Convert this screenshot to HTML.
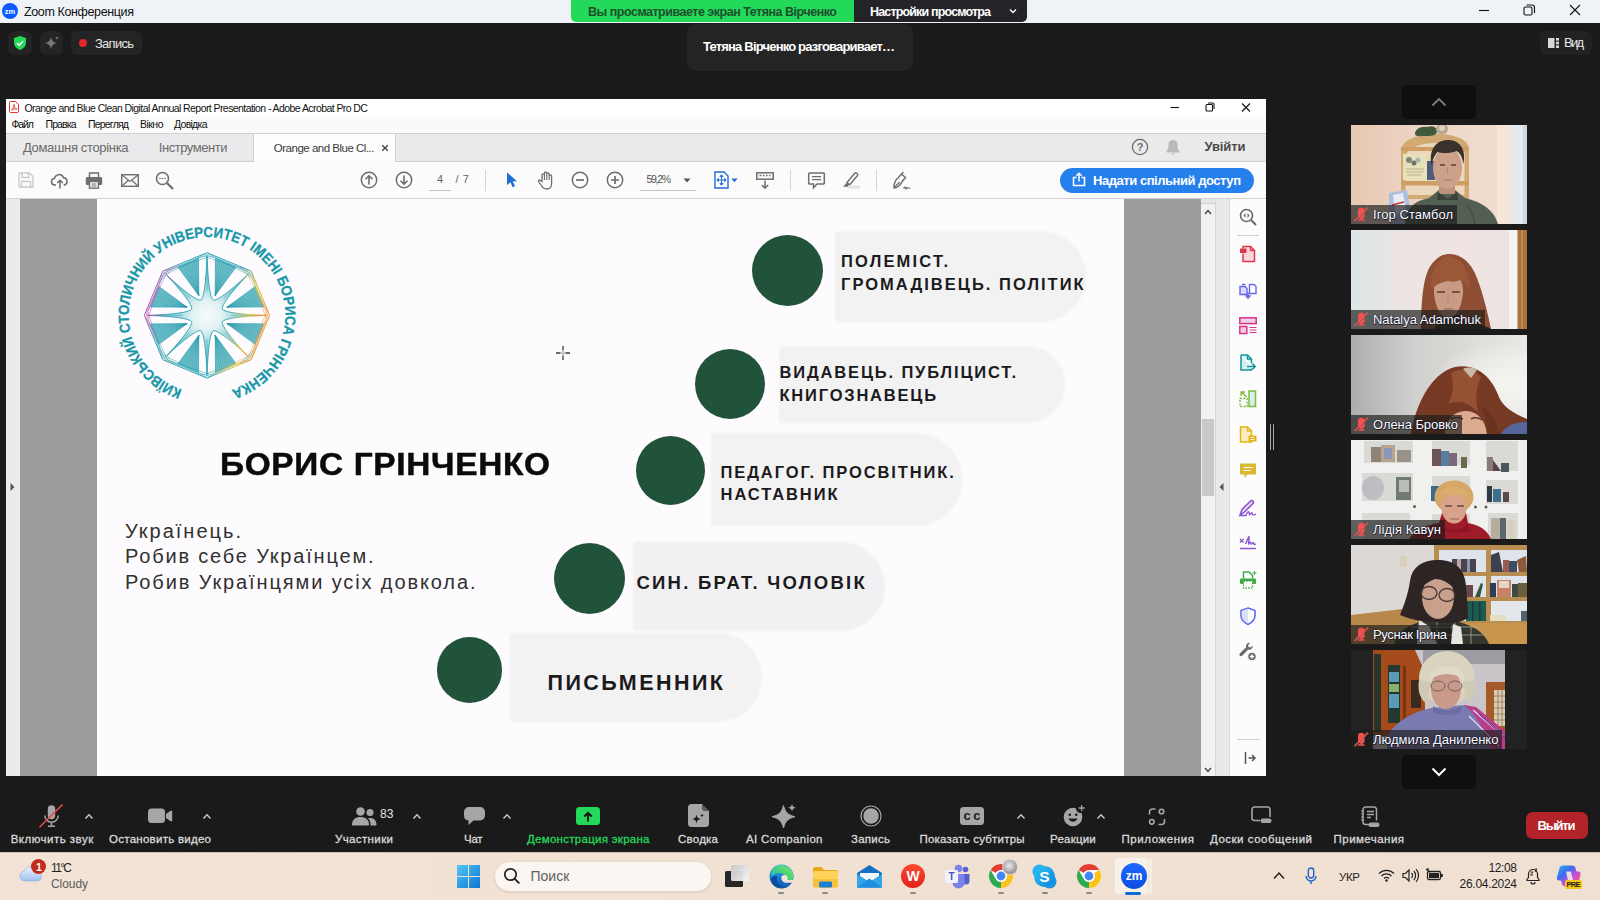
<!DOCTYPE html>
<html lang="uk"><head><meta charset="utf-8"><title>Zoom Конференция</title>
<style>
html,body{margin:0;padding:0;width:1600px;height:900px;overflow:hidden;background:#1a1a1a;font-family:"Liberation Sans",sans-serif}
.b{position:absolute;box-sizing:border-box}
.t{position:absolute;white-space:pre;line-height:1}
svg{position:absolute;overflow:visible}
#root{position:relative;width:1600px;height:900px;overflow:hidden}
</style></head><body><div id="root">
<div class="b" style="left:0px;top:0px;width:1600px;height:23px;background:#eff3f8;"></div>
<svg style="left:2px;top:3px" width="16" height="16" viewBox="0 0 16 16"><circle cx="8" cy="8" r="8" fill="#0b5cff"/><text x="8" y="10.6" font-family="Liberation Sans, sans-serif" font-size="7.5" font-weight="bold" fill="#fff" text-anchor="middle">zm</text></svg>
<span class="t" style="left:24.00px;top:6px;font:normal 12.5px 'Liberation Sans', sans-serif;line-height:1;color:#111;letter-spacing:-0.368px;">Zoom Конференция</span>
<svg style="left:1470px;top:0" width="130" height="23" viewBox="0 0 130 23" fill="none" stroke="#111" stroke-width="1.1"><path d="M9 10.5h10"/><rect x="54" y="7" width="8" height="8" rx="1.5"/><path d="M56.5 5h5.5a2.5 2.5 0 0 1 2.500 2.500v5.500"/><path d="M100 5l10 10M110 5l-10 10"/></svg>
<div class="b" style="left:571px;top:0px;width:283px;height:22px;background:#23d959;border-radius:0 0 0 5px"></div>
<div class="b" style="left:854px;top:0px;width:173px;height:22px;background:#232328;border-radius:0 0 5px 0"></div>
<span class="t" style="left:588.00px;top:6px;font:bold 12.5px 'Liberation Sans', sans-serif;line-height:1;color:#1d4f2c;letter-spacing:-0.483px;">Вы просматриваете экран Тетяна Вірченко</span>
<span class="t" style="left:870.00px;top:6px;font:bold 12.5px 'Liberation Sans', sans-serif;line-height:1;color:#fff;letter-spacing:-0.842px;">Настройки просмотра</span>
<svg style="left:1008px;top:7px" width="10" height="8" viewBox="0 0 10 8" fill="none" stroke="#fff" stroke-width="1.4"><path d="M2 2.500l3 3 3-3"/></svg>
<div class="b" style="left:0px;top:23px;width:1600px;height:829px;background:#1a1a1a;"></div>
<div class="b" style="left:8px;top:31px;width:24px;height:24px;background:#242424;border-radius:6px"></div>
<svg style="left:12px;top:35px" width="16" height="16" viewBox="0 0 16 16"><path d="M8 1l6 2v4.500c0 3.600-2.500 6.300-6 7.500-3.500-1.200-6-3.900-6-7.500V3z" fill="#23d959"/><path d="M5 8l2.200 2.200L11 6.300" fill="none" stroke="#fff" stroke-width="1.600"/></svg>
<div class="b" style="left:40px;top:31px;width:23px;height:24px;background:#242424;border-radius:6px"></div>
<svg style="left:43.500px;top:35px" width="16" height="16" viewBox="0 0 16 16" fill="#77777b"><path d="M7 1.500c.7 4.300 2.200 5.800 6.500 6.500-4.300.7-5.800 2.200-6.500 6.500-.7-4.300-2.200-5.800-6.500-6.500 4.300-.7 5.800-2.200 6.500-6.500z"/><path d="M13 .8c.2 1.400.7 1.900 2.100 2.100-1.400.2-1.900.7-2.100 2.100-.2-1.400-.7-1.900-2.100-2.100 1.400-.2 1.900-.7 2.100-2.100z"/></svg>
<div class="b" style="left:71px;top:31px;width:71px;height:24px;background:#242424;border-radius:6px"></div>
<div class="b" style="left:79px;top:39px;width:8px;height:8px;background:#e02828;border-radius:50%"></div>
<span class="t" style="left:95.00px;top:37px;font:normal 13px 'Liberation Sans', sans-serif;line-height:1;color:#e6e6e6;letter-spacing:-0.731px;">Запись</span>
<div class="b" style="left:687px;top:23.5px;width:226px;height:47.5px;background:#242424;border-radius:9px"></div>
<span class="t" style="left:703.00px;top:40px;font:bold 13px 'Liberation Sans', sans-serif;line-height:1;color:#fff;letter-spacing:-0.813px;">Тетяна Вірченко разговаривает…</span>
<div class="b" style="left:1540px;top:31px;width:52px;height:24px;background:#222;border-radius:6px"></div>
<svg style="left:1548px;top:38px" width="12" height="10" viewBox="0 0 12 10" fill="#d8d8d8"><rect x="0" y="0" width="6.500" height="10"/><rect x="8" y="0" width="3" height="2.600"/><rect x="8" y="3.700" width="3" height="2.600"/><rect x="8" y="7.400" width="3" height="2.600"/></svg>
<span class="t" style="left:1564.00px;top:36px;font:normal 13px 'Liberation Sans', sans-serif;line-height:1;color:#e6e6e6;letter-spacing:-1.766px;">Вид</span>
<div class="b" style="left:1402px;top:85px;width:74px;height:34px;background:#0f0f0f;border-radius:5px"></div>
<svg style="left:1431px;top:97px" width="16" height="10" viewBox="0 0 16 10" fill="none" stroke="#7d7a8c" stroke-width="1.800"><path d="M1.500 8.500l6.500-6.500 6.500 6.500"/></svg>
<div class="b" style="left:1402px;top:755px;width:74px;height:34px;background:#0f0f0f;border-radius:5px"></div>
<svg style="left:1431px;top:767px" width="16" height="10" viewBox="0 0 16 10" fill="none" stroke="#fff" stroke-width="2"><path d="M1.500 1.500l6.500 6.500 6.500-6.500"/></svg>
<div class="b" style="left:1269.8px;top:424px;width:1.5px;height:26px;background:#a8a8a8;border-radius:1px"></div>
<div class="b" style="left:1272.8px;top:424px;width:1.5px;height:26px;background:#a8a8a8;border-radius:1px"></div>
<div class="b" style="left:0px;top:852px;width:1600px;height:48px;background:linear-gradient(90deg,#f2e3d6 0%,#f1e1d3 50%,#f0e0d2 100%);"></div>
<div class="b" style="left:6px;top:99px;width:1260px;height:677px;background:#fdfbfd;"></div>
<div class="b" style="left:6px;top:99px;width:1260px;height:17px;background:#ffffff;"></div>
<div class="b" style="left:6px;top:116px;width:1260px;height:17px;background:#fafafa;"></div>
<div class="b" style="left:6px;top:133px;width:1260px;height:29px;background:#eaeaec;border-top:1px solid #d2d2d4;border-bottom:1px solid #cfcfd1"></div>
<div class="b" style="left:253px;top:134px;width:143px;height:28px;background:#fdfdfd;border-left:1px solid #cfcfd1;border-right:1px solid #cfcfd1"></div>
<div class="b" style="left:6px;top:162px;width:1260px;height:37px;background:#fbfbfb;border-bottom:1px solid #d2d2d4"></div>
<svg style="left:9px;top:101px" width="10" height="12" viewBox="0 0 10 12"><path d="M1.500.5h5l3 3v7a1 1 0 0 1-1 1h-7a1 1 0 0 1-1-1v-9a1 1 0 0 1 1-1z" fill="#fff" stroke="#e0352b" stroke-width="1"/><path d="M2.500 9c1.500-1 2.500-3.500 2.500-5.500 0 2.500 1.500 4 3 4.500-2-.2-4 .2-5.500 1z" fill="none" stroke="#e0352b" stroke-width=".9"/></svg>
<span class="t" style="left:24.50px;top:103px;font:normal 10.5px 'Liberation Sans', sans-serif;line-height:1;color:#111;letter-spacing:-0.573px;">Orange and Blue Clean Digital Annual Report Presentation - Adobe Acrobat Pro DC</span>
<span class="t" style="left:11.50px;top:119px;font:normal 10.5px 'Liberation Sans', sans-serif;line-height:1;color:#111;letter-spacing:-1.109px;">Файл</span>
<span class="t" style="left:45.50px;top:119px;font:normal 10.5px 'Liberation Sans', sans-serif;line-height:1;color:#111;letter-spacing:-0.894px;">Правка</span>
<span class="t" style="left:88.00px;top:119px;font:normal 10.5px 'Liberation Sans', sans-serif;line-height:1;color:#111;letter-spacing:-0.801px;">Перегляд</span>
<span class="t" style="left:140.00px;top:119px;font:normal 10.5px 'Liberation Sans', sans-serif;line-height:1;color:#111;letter-spacing:-0.520px;">Вікно</span>
<span class="t" style="left:174.00px;top:119px;font:normal 10.5px 'Liberation Sans', sans-serif;line-height:1;color:#111;letter-spacing:-0.714px;">Довідка</span>
<svg style="left:1166px;top:99px" width="100" height="17" viewBox="0 0 100 17" fill="none" stroke="#111" stroke-width="1.100"><path d="M4.500 8.500h8.500"/><rect x="40" y="5.500" width="6.500" height="6.500" rx="1"/><path d="M42 4h4.500a1.500 1.500 0 0 1 1.500 1.500v4.500"/><path d="M76 4.500l8 8M84 4.500l-8 8"/></svg>
<span class="t" style="left:23.00px;top:141px;font:normal 13px 'Liberation Sans', sans-serif;line-height:1;color:#6b6b6b;letter-spacing:-0.344px;">Домашня сторінка</span>
<span class="t" style="left:158.80px;top:141px;font:normal 13px 'Liberation Sans', sans-serif;line-height:1;color:#6b6b6b;letter-spacing:-0.455px;">Інструменти</span>
<span class="t" style="left:273.80px;top:143px;font:normal 11.5px 'Liberation Sans', sans-serif;line-height:1;color:#3a3a3a;letter-spacing:-0.495px;">Orange and Blue Cl...</span>
<svg style="left:381px;top:144px" width="8" height="8" viewBox="0 0 8 8" stroke="#444" stroke-width="1.400"><path d="M1.200 1.200l5.600 5.600M6.800 1.200l-5.600 5.600"/></svg>
<svg style="left:1131px;top:138px" width="18" height="18" viewBox="0 0 18 18"><circle cx="9" cy="9" r="7.600" fill="none" stroke="#6a6a6a" stroke-width="1.300"/><text x="9" y="13" font-family="Liberation Sans, sans-serif" font-size="11" font-weight="bold" fill="#6a6a6a" text-anchor="middle">?</text></svg>
<svg style="left:1165px;top:139px" width="16" height="17" viewBox="0 0 16 17" fill="#b9b9b9"><path d="M8 1c-3 0-4.600 2.200-4.600 5v3.500L1.500 12.500v1h13v-1l-1.900-3V6c0-2.800-1.600-5-4.600-5z"/><path d="M6.300 14.500a1.800 1.800 0 0 0 3.400 0z"/></svg>
<span class="t" style="left:1204.50px;top:140px;font:bold 13px 'Liberation Sans', sans-serif;line-height:1;color:#4b4b4b;letter-spacing:-0.109px;">Увійти</span>
<div class="b" style="left:1060px;top:167.5px;width:194px;height:25px;background:#2680eb;border-radius:13px"></div>
<svg style="left:1072px;top:172px" width="14" height="15" viewBox="0 0 14 15" fill="none" stroke="#fff" stroke-width="1.500"><path d="M4.500 5.500h-3v8h11v-8h-3"/><path d="M7 9.500v-8M4.300 3.800L7 1.200l2.700 2.600"/></svg>
<span class="t" style="left:1093.00px;top:174px;font:bold 13px 'Liberation Sans', sans-serif;line-height:1;color:#fff;letter-spacing:-0.452px;">Надати спільний доступ</span>
<svg style="left:17.7px;top:172.0px" width="16" height="16" viewBox="0 0 16 16"><path d="M1 1h10.500l3.500 3.500v10.500h-14z" fill="none" stroke="#c9c9c9" stroke-width="1.300"/><path d="M4 1v4.500h6.500v-4.500M3.500 15v-5.500h9v5.500" fill="none" stroke="#c9c9c9" stroke-width="1.300"/></svg>
<svg style="left:51.4px;top:172.5px" width="18" height="16" viewBox="0 0 18 16"><path d="M5 12h-1a3.300 3.300 0 0 1-.4-6.600 4.600 4.600 0 0 1 8.900-.6 3.700 3.700 0 0 1 1 7.200h-.8" fill="none" stroke="#6e6e6e" stroke-width="1.500"/><path d="M9 15.500v-8M6.200 10l2.800-2.800 2.800 2.800" fill="none" stroke="#6e6e6e" stroke-width="1.500"/></svg>
<svg style="left:85.2px;top:171.5px" width="18" height="17" viewBox="0 0 18 17"><path d="M4.500 5v-4h9v4" fill="none" stroke="#6e6e6e" stroke-width="1.500"/><rect x=".8" y="5" width="16.400" height="8" rx="1.500" fill="#6e6e6e"/><rect x="4.500" y="9.500" width="9" height="6.700" fill="#fbfbfb" stroke="#6e6e6e" stroke-width="1.400"/><path d="M6.500 12h5M6.500 14h5" stroke="#6e6e6e" stroke-width="1"/></svg>
<svg style="left:120.5px;top:173.5px" width="18" height="13" viewBox="0 0 18 13"><rect x=".7" y=".7" width="16.600" height="11.600" fill="none" stroke="#6e6e6e" stroke-width="1.400"/><path d="M1 1l8 6.500 8-6.500M1 12l6-5.500M17 12l-6-5.500" fill="none" stroke="#6e6e6e" stroke-width="1.200"/></svg>
<svg style="left:155.2px;top:171.0px" width="19" height="19" viewBox="0 0 19 19"><circle cx="7.500" cy="7.500" r="6" fill="none" stroke="#6e6e6e" stroke-width="1.600"/><path d="M12 12l6 6" stroke="#6e6e6e" stroke-width="2.200"/><circle cx="5" cy="7.500" r=".8" fill="#6e6e6e"/><circle cx="7.500" cy="7.500" r=".8" fill="#6e6e6e"/><circle cx="10" cy="7.500" r=".8" fill="#6e6e6e"/></svg>
<svg style="left:359.8px;top:171.0px" width="18" height="18" viewBox="0 0 18 18"><circle cx="9" cy="9" r="7.700" fill="none" stroke="#6e6e6e" stroke-width="1.500"/><path d="M9 13.500v-8.500M5.500 8.300L9 4.800l3.500 3.500" fill="none" stroke="#6e6e6e" stroke-width="1.600"/></svg>
<svg style="left:394.5px;top:171.0px" width="18" height="18" viewBox="0 0 18 18"><circle cx="9" cy="9" r="7.700" fill="none" stroke="#6e6e6e" stroke-width="1.500"/><path d="M9 4.500v8.500M5.500 9.700L9 13.200l3.500-3.500" fill="none" stroke="#6e6e6e" stroke-width="1.600"/></svg>
<span class="t" style="left:437.00px;top:174px;font:normal 11px 'Liberation Sans', sans-serif;line-height:1;color:#666;">4</span>
<div class="b" style="left:429px;top:190px;width:22px;height:1px;background:#c4c4c4;"></div>
<span class="t" style="left:455.50px;top:174px;font:normal 11px 'Liberation Sans', sans-serif;line-height:1;color:#666;letter-spacing:-0.599px;">/  7</span>
<div class="b" style="left:485px;top:169.5px;width:1px;height:21px;background:#d4d4d4;"></div>
<svg style="left:505.5px;top:172.0px" width="11" height="16" viewBox="0 0 11 16"><path d="M1 .5v12.500l3.400-2.800 2.200 5 2.400-1-2.200-5h4.200z" fill="#1f6fd6"/></svg>
<svg style="left:536.5px;top:170.8px" width="18" height="19" viewBox="0 0 18 19"><path d="M5 10.500v-6.500a1.200 1.200 0 0 1 2.400 0v-1.800a1.200 1.200 0 0 1 2.400 0v1a1.200 1.200 0 0 1 2.400 0v1.800a1.200 1.200 0 0 1 2.400 0v7.500c0 3.500-2 5.500-5 5.500-2.500 0-3.700-1-5-3l-3-4.500c-.6-1 .6-2 1.600-1.200z" fill="none" stroke="#6e6e6e" stroke-width="1.300"/><path d="M7.400 4v5M9.800 3.200v5.800M12.200 4.200v4.800" stroke="#6e6e6e" stroke-width="1.100"/></svg>
<svg style="left:571.0px;top:171.0px" width="18" height="18" viewBox="0 0 18 18"><circle cx="9" cy="9" r="7.700" fill="none" stroke="#6e6e6e" stroke-width="1.500"/><path d="M5 9h8" stroke="#6e6e6e" stroke-width="1.700"/></svg>
<svg style="left:605.5px;top:171.0px" width="18" height="18" viewBox="0 0 18 18"><circle cx="9" cy="9" r="7.700" fill="none" stroke="#6e6e6e" stroke-width="1.500"/><path d="M5 9h8M9 5v8" stroke="#6e6e6e" stroke-width="1.700"/></svg>
<span class="t" style="left:646.50px;top:174px;font:normal 10.5px 'Liberation Sans', sans-serif;line-height:1;color:#555;letter-spacing:-1.320px;">59,2%</span>
<div class="b" style="left:640px;top:190px;width:56px;height:1px;background:#c4c4c4;"></div>
<svg style="left:683px;top:178px" width="8" height="5" viewBox="0 0 8 5"><path d="M.5.500h7l-3.500 4z" fill="#555"/></svg>
<svg style="left:713.5px;top:170.5px" width="15" height="18" viewBox="0 0 15 18"><path d="M1 1h9l4 4v12h-13z" fill="#fff" stroke="#1f6fd6" stroke-width="1.400"/><path d="M7.500 4v10M3 9h9M7.500 4l-1.700 1.800M7.500 4l1.700 1.800M7.500 14l-1.700-1.800M7.500 14l1.700-1.800M3 9l1.800-1.700M3 9l1.800 1.700M12 9l-1.800-1.700M12 9l-1.800 1.700" fill="none" stroke="#1f6fd6" stroke-width="1.100"/></svg>
<svg style="left:731px;top:178px" width="7" height="5" viewBox="0 0 7 5"><path d="M.3.500h6.400l-3.200 3.800z" fill="#1f6fd6"/></svg>
<svg style="left:756.0px;top:172.0px" width="18" height="17" viewBox="0 0 18 17"><rect x=".8" y=".8" width="16.400" height="6.400" fill="none" stroke="#6e6e6e" stroke-width="1.500"/><path d="M3.500 3.500h2M7 3.500h1.500M10 3.500h1.500M13 3.500h1.500" stroke="#6e6e6e" stroke-width="1.400"/><path d="M9 8.500v7.500M5.800 13L9 16.200l3.200-3.200" fill="none" stroke="#6e6e6e" stroke-width="1.500"/></svg>
<div class="b" style="left:790px;top:169.5px;width:1px;height:21px;background:#d4d4d4;"></div>
<svg style="left:807.5px;top:172.0px" width="17" height="17" viewBox="0 0 17 17"><path d="M1.500 1h14a.8.800 0 0 1 .8.800v9.400a.8.800 0 0 1-.8.800h-6.500l-3.500 3.800v-3.800h-4a.8.800 0 0 1-.8-.8v-9.400a.8.800 0 0 1 .8-.8z" fill="none" stroke="#6e6e6e" stroke-width="1.500"/><path d="M4 4.700h9M4 7.700h9" stroke="#6e6e6e" stroke-width="1.300"/></svg>
<svg style="left:842.0px;top:171.0px" width="18" height="18" viewBox="0 0 18 18"><path d="M5 11.500l8-9.500c.8-.9 3.500 1.300 2.700 2.300l-8 9.500z" fill="none" stroke="#6e6e6e" stroke-width="1.400"/><path d="M4.800 11.700l-3.800 4h5l1.500-1.800z" fill="#6e6e6e"/><rect x="6" y="14.500" width="12" height="3" fill="#e3e3e3"/></svg>
<div class="b" style="left:876px;top:169.5px;width:1px;height:21px;background:#d4d4d4;"></div>
<svg style="left:892.0px;top:171.5px" width="19" height="18" viewBox="0 0 19 18"><path d="M2 16c-.5-4 1.500-8.500 4.500-10.500l3-3.500 4 3.500-3 3.500c-1.500 3.500-4.500 6.500-8.500 7z" fill="none" stroke="#6e6e6e" stroke-width="1.500"/><path d="M9.500 2l2-2M2.200 15.800l5.500-5.800" stroke="#6e6e6e" stroke-width="1.300"/><path d="M11.500 16.500c1-2 1.500-2 1.800 0 .8-1.500 1.300-1.500 1.700 0 .5-1 1.500-1 3 0" fill="none" stroke="#6e6e6e" stroke-width="1.100"/></svg>
<div class="b" style="left:6px;top:199px;width:14px;height:577px;background:#ebebed;"></div>
<svg style="left:10px;top:482px" width="5" height="10" viewBox="0 0 5 10"><path d="M.5 1l4 4-4 4z" fill="#555"/></svg>
<div class="b" style="left:20px;top:199px;width:77px;height:577px;background:#9c9a9c;"></div>
<div class="b" style="left:97px;top:199px;width:1027px;height:577px;background:#fdfbfd;"></div>
<div class="b" style="left:1124px;top:199px;width:77px;height:577px;background:#9c9a9c;"></div>
<div class="b" style="left:1201px;top:199px;width:14px;height:577px;background:#f1f1f1;"></div>
<div class="b" style="left:1202px;top:419px;width:12px;height:77px;background:#c9c9cb;"></div>
<div class="b" style="left:1201px;top:199px;width:14px;height:5px;background:#e6e6e6;border-bottom:1px solid #cfcfcf"></div>
<svg style="left:1204px;top:209px" width="8" height="6" viewBox="0 0 8 6" fill="none" stroke="#444" stroke-width="1.400"><path d="M1 5l3-3.500 3 3.500"/></svg>
<svg style="left:1204px;top:767px" width="8" height="6" viewBox="0 0 8 6" fill="none" stroke="#444" stroke-width="1.400"><path d="M1 1l3 3.500 3-3.500"/></svg>
<div class="b" style="left:1215px;top:199px;width:14px;height:577px;background:#e9e9eb;border-left:1px solid #d6d6d8"></div>
<svg style="left:1219px;top:482px" width="5" height="10" viewBox="0 0 5 10"><path d="M4.500 1l-4 4 4 4z" fill="#555"/></svg>
<div class="b" style="left:1229px;top:199px;width:37px;height:577px;background:#fcfcfc;border-left:1px solid #d9d9db"></div>
<svg style="left:0;top:0" width="1600" height="900" viewBox="0 0 1600 900"><defs><linearGradient id="lg" x1="0" y1="0" x2="1" y2="0.300"><stop offset="0" stop-color="#5a6fd0"/><stop offset=".12" stop-color="#c94fb0"/><stop offset=".3" stop-color="#2aa3b2"/><stop offset=".75" stop-color="#2aa3b2"/><stop offset=".92" stop-color="#e8c43c"/><stop offset="1" stop-color="#e8983c"/></linearGradient><radialGradient id="rg" cx=".5" cy=".5" r=".5"><stop offset="0" stop-color="#f6fbfb"/><stop offset=".25" stop-color="#e2f2f3"/><stop offset=".45" stop-color="#a9dae0"/><stop offset="1" stop-color="#5db7c3"/></radialGradient><linearGradient id="wg" x1="0" y1="0" x2="0" y2="1"><stop offset="0" stop-color="#2a9fb0"/><stop offset="1" stop-color="#8fd0d8"/></linearGradient></defs><polygon points="215.5,258.7 235.9,267.2 215.2,295.5" fill="#6fbfc9" stroke="#2a9fb0" stroke-width=".7"/><path d="M217.8,259.7L215.2,295.5M220.1,260.6L215.2,295.5M222.3,261.5L215.2,295.5M224.6,262.5L215.2,295.5M226.9,263.4L215.2,295.5M229.1,264.4L215.2,295.5M231.4,265.3L215.2,295.5M233.7,266.2L215.2,295.5" stroke="#2397a8" stroke-width=".45" stroke-opacity=".8" fill="none"/><polygon points="255.2,286.5 263.7,306.9 226.9,307.2" fill="#6fbfc9" stroke="#2a9fb0" stroke-width=".7"/><path d="M256.2,288.7L226.9,307.2M257.1,291.0L226.9,307.2M258.0,293.3L226.9,307.2M259.0,295.5L226.9,307.2M259.9,297.8L226.9,307.2M260.9,300.1L226.9,307.2M261.8,302.3L226.9,307.2M262.7,304.6L226.9,307.2" stroke="#2397a8" stroke-width=".45" stroke-opacity=".8" fill="none"/><polygon points="263.7,323.9 255.2,344.3 226.9,323.6" fill="#6fbfc9" stroke="#2a9fb0" stroke-width=".7"/><path d="M262.7,326.2L226.9,323.6M261.8,328.5L226.9,323.6M260.9,330.7L226.9,323.6M259.9,333.0L226.9,323.6M259.0,335.3L226.9,323.6M258.0,337.5L226.9,323.6M257.1,339.8L226.9,323.6M256.2,342.1L226.9,323.6" stroke="#2397a8" stroke-width=".45" stroke-opacity=".8" fill="none"/><polygon points="235.9,363.6 215.5,372.1 215.2,335.3" fill="#6fbfc9" stroke="#2a9fb0" stroke-width=".7"/><path d="M233.7,364.6L215.2,335.3M231.4,365.5L215.2,335.3M229.1,366.4L215.2,335.3M226.9,367.4L215.2,335.3M224.6,368.3L215.2,335.3M222.3,369.3L215.2,335.3M220.1,370.2L215.2,335.3M217.8,371.1L215.2,335.3" stroke="#2397a8" stroke-width=".45" stroke-opacity=".8" fill="none"/><polygon points="198.5,372.1 178.1,363.6 198.8,335.3" fill="#6fbfc9" stroke="#2a9fb0" stroke-width=".7"/><path d="M196.2,371.1L198.8,335.3M193.9,370.2L198.8,335.3M191.7,369.3L198.8,335.3M189.4,368.3L198.8,335.3M187.1,367.4L198.8,335.3M184.9,366.4L198.8,335.3M182.6,365.5L198.8,335.3M180.3,364.6L198.8,335.3" stroke="#2397a8" stroke-width=".45" stroke-opacity=".8" fill="none"/><polygon points="158.8,344.3 150.3,323.9 187.1,323.6" fill="#6fbfc9" stroke="#2a9fb0" stroke-width=".7"/><path d="M157.8,342.1L187.1,323.6M156.9,339.8L187.1,323.6M156.0,337.5L187.1,323.6M155.0,335.3L187.1,323.6M154.1,333.0L187.1,323.6M153.1,330.7L187.1,323.6M152.2,328.5L187.1,323.6M151.3,326.2L187.1,323.6" stroke="#2397a8" stroke-width=".45" stroke-opacity=".8" fill="none"/><polygon points="150.3,306.9 158.8,286.5 187.1,307.2" fill="#6fbfc9" stroke="#2a9fb0" stroke-width=".7"/><path d="M151.3,304.6L187.1,307.2M152.2,302.3L187.1,307.2M153.1,300.1L187.1,307.2M154.1,297.8L187.1,307.2M155.0,295.5L187.1,307.2M156.0,293.3L187.1,307.2M156.9,291.0L187.1,307.2M157.8,288.7L187.1,307.2" stroke="#2397a8" stroke-width=".45" stroke-opacity=".8" fill="none"/><polygon points="178.1,267.2 198.5,258.7 198.8,295.5" fill="#6fbfc9" stroke="#2a9fb0" stroke-width=".7"/><path d="M180.3,266.2L198.8,295.5M182.6,265.3L198.8,295.5M184.9,264.4L198.8,295.5M187.1,263.4L198.8,295.5M189.4,262.5L198.8,295.5M191.7,261.5L198.8,295.5M193.9,260.6L198.8,295.5M196.2,259.7L198.8,295.5" stroke="#2397a8" stroke-width=".45" stroke-opacity=".8" fill="none"/><path d="M207.0,255.9 Q208.5,296.5 213.3,300.2 Q219.3,301.0 247.0,275.4 Q221.4,303.1 222.2,309.1 Q225.9,313.9 266.5,315.4 Q225.9,316.9 222.2,321.7 Q221.4,327.7 247.0,355.4 Q219.3,329.8 213.3,330.6 Q208.5,334.3 207.0,374.9 Q205.5,334.3 200.7,330.6 Q194.7,329.8 167.0,355.4 Q192.6,327.7 191.8,321.7 Q188.1,316.9 147.5,315.4 Q188.1,313.9 191.8,309.1 Q192.6,303.1 167.0,275.4 Q194.7,301.0 200.7,300.2 Q205.5,296.5 207.0,255.9Z" fill="url(#rg)" stroke="url(#lg)" stroke-width=".9"/><path d="M207.0,291.4L207.0,255.4M224.0,298.4L249.4,273.0M231.0,315.4L267.0,315.4M224.0,332.4L249.4,357.8M207.0,339.4L207.0,375.4M190.0,332.4L164.6,357.8M183.0,315.4L147.0,315.4M190.0,298.4L164.6,273.0" stroke="url(#lg)" stroke-width=".5" fill="none"/><polygon points="207.0,252.7 251.3,271.1 269.7,315.4 251.3,359.7 207.0,378.1 162.7,359.7 144.3,315.4 162.7,271.1" fill="none" stroke="url(#lg)" stroke-width="1.0"/><polygon points="209.1,254.3 251.7,273.7 268.1,317.5 248.7,360.1 204.9,376.5 162.3,357.1 145.9,313.3 165.3,270.7" fill="none" stroke="url(#lg)" stroke-width="0.5"/><polygon points="211.2,256.0 251.9,276.4 266.4,319.6 246.0,360.3 202.8,374.8 162.1,354.4 147.6,311.2 168.0,270.5" fill="none" stroke="url(#lg)" stroke-width="0.5"/><polygon points="204.9,254.3 248.7,270.7 268.1,313.3 251.7,357.1 209.1,376.5 165.3,360.1 145.9,317.5 162.3,273.7" fill="none" stroke="url(#lg)" stroke-width="0.5"/><polygon points="202.8,256.0 246.0,270.5 266.4,311.2 251.9,354.4 211.2,374.8 168.0,360.3 147.6,319.6 162.1,276.4" fill="none" stroke="url(#lg)" stroke-width="0.5"/><path d="M201.8,255.9L212.2,255.9" stroke="url(#lg)" stroke-width=".5"/><path d="M196.5,258.0L217.5,258.0" stroke="url(#lg)" stroke-width=".5"/><path d="M245.4,269.6L252.8,277.0" stroke="url(#lg)" stroke-width=".5"/><path d="M240.2,267.4L255.0,282.2" stroke="url(#lg)" stroke-width=".5"/><path d="M266.5,310.2L266.5,320.6" stroke="url(#lg)" stroke-width=".5"/><path d="M264.4,304.9L264.4,325.9" stroke="url(#lg)" stroke-width=".5"/><path d="M252.8,353.8L245.4,361.2" stroke="url(#lg)" stroke-width=".5"/><path d="M255.0,348.6L240.2,363.4" stroke="url(#lg)" stroke-width=".5"/><path d="M212.2,374.9L201.8,374.9" stroke="url(#lg)" stroke-width=".5"/><path d="M217.5,372.8L196.5,372.8" stroke="url(#lg)" stroke-width=".5"/><path d="M168.6,361.2L161.2,353.8" stroke="url(#lg)" stroke-width=".5"/><path d="M173.8,363.4L159.0,348.6" stroke="url(#lg)" stroke-width=".5"/><path d="M147.5,320.6L147.5,310.2" stroke="url(#lg)" stroke-width=".5"/><path d="M149.6,325.9L149.6,304.9" stroke="url(#lg)" stroke-width=".5"/><path d="M161.2,277.0L168.6,269.6" stroke="url(#lg)" stroke-width=".5"/><path d="M159.0,282.2L173.8,267.4" stroke="url(#lg)" stroke-width=".5"/><path id="circ" d="M182.03,389.61 A78.3,78.3 0 1 1 231.97,389.61" fill="none"/><text font-family="Liberation Sans, sans-serif" font-weight="bold" font-size="14.600" fill="#1897a8" stroke="#1897a8" stroke-width=".3"><textPath href="#circ" textLength="441.1" lengthAdjust="spacingAndGlyphs">КИЇВСЬКИЙ СТОЛИЧНИЙ УНІВЕРСИТЕТ ІМЕНІ БОРИСА ГРІНЧЕНКА</textPath></text><path d="M563 346v14M556 353h14" stroke="#3a3a3a" stroke-width="1.300"/><path d="M563 350v6M560 353h6" stroke="#fff" stroke-width="1"/></svg>
<span class="t" style="left:220.00px;top:449px;font:bold 31.5px 'Liberation Sans', sans-serif;line-height:1;color:#0b0b0b;letter-spacing:0.646px;transform:scaleX(1.06);transform-origin:0 0;-webkit-text-stroke:.5px #0b0b0b;">БОРИС ГРІНЧЕНКО</span>
<span class="t" style="left:125.00px;top:521px;font:normal 20px 'Liberation Sans', sans-serif;line-height:1;color:#303030;letter-spacing:2.003px;">Українець.</span>
<span class="t" style="left:125.00px;top:546px;font:normal 20px 'Liberation Sans', sans-serif;line-height:1;color:#303030;letter-spacing:1.812px;">Робив себе Українцем.</span>
<span class="t" style="left:125.00px;top:572px;font:normal 20px 'Liberation Sans', sans-serif;line-height:1;color:#303030;letter-spacing:1.887px;">Робив Українцями усіх довкола.</span>
<div class="b" style="left:836px;top:232px;width:249px;height:89px;background:#f3f2f3;border-radius:3px 44.5px 44.5px 3px;box-shadow:0 0 3px 1px #f3f2f3"></div>
<div class="b" style="left:751.5px;top:234.5px;width:71.0px;height:71.0px;background:#21533a;border-radius:50%"></div>
<span class="t" style="left:841.00px;top:253px;font:bold 16.5px 'Liberation Sans', sans-serif;line-height:1;color:#1c1a1d;letter-spacing:2.186px;">ПОЛЕМІСТ.</span>
<span class="t" style="left:841.00px;top:276px;font:bold 16.5px 'Liberation Sans', sans-serif;line-height:1;color:#1c1a1d;letter-spacing:2.034px;">ГРОМАДІВЕЦЬ. ПОЛІТИК</span>
<div class="b" style="left:779.5px;top:346.5px;width:284.5px;height:75.5px;background:#f3f2f3;border-radius:3px 37.8px 37.8px 3px;box-shadow:0 0 3px 1px #f3f2f3"></div>
<div class="b" style="left:694.7px;top:348.5px;width:70.6px;height:70.6px;background:#21533a;border-radius:50%"></div>
<span class="t" style="left:779.50px;top:364px;font:bold 16.5px 'Liberation Sans', sans-serif;line-height:1;color:#1c1a1d;letter-spacing:1.847px;">ВИДАВЕЦЬ. ПУБЛІЦИСТ.</span>
<span class="t" style="left:779.50px;top:387px;font:bold 16.5px 'Liberation Sans', sans-serif;line-height:1;color:#1c1a1d;letter-spacing:1.788px;">КНИГОЗНАВЕЦЬ</span>
<div class="b" style="left:712px;top:434px;width:249px;height:91px;background:#f3f2f3;border-radius:3px 45.5px 45.5px 3px;box-shadow:0 0 3px 1px #f3f2f3"></div>
<div class="b" style="left:635.5px;top:435.5px;width:69.0px;height:69.0px;background:#21533a;border-radius:50%"></div>
<span class="t" style="left:720.60px;top:464px;font:bold 16.5px 'Liberation Sans', sans-serif;line-height:1;color:#1c1a1d;letter-spacing:1.886px;">ПЕДАГОГ. ПРОСВІТНИК.</span>
<span class="t" style="left:720.60px;top:486px;font:bold 16.5px 'Liberation Sans', sans-serif;line-height:1;color:#1c1a1d;letter-spacing:1.905px;">НАСТАВНИК</span>
<div class="b" style="left:633.5px;top:543px;width:250.5px;height:87px;background:#f1f1f4;border-radius:3px 43.5px 43.5px 3px;box-shadow:0 0 3px 1px #f1f1f4"></div>
<div class="b" style="left:553.8px;top:542.8px;width:71.2px;height:71.2px;background:#21533a;border-radius:50%"></div>
<span class="t" style="left:636.50px;top:574px;font:bold 18.5px 'Liberation Sans', sans-serif;line-height:1;color:#1c1a1d;letter-spacing:2.227px;">СИН. БРАТ. ЧОЛОВІК</span>
<div class="b" style="left:511px;top:633.5px;width:250px;height:87.5px;background:#f3f2f3;border-radius:3px 43.8px 43.8px 3px;box-shadow:0 0 3px 1px #f3f2f3"></div>
<div class="b" style="left:436.59999999999997px;top:637.2px;width:65.6px;height:65.6px;background:#21533a;border-radius:50%"></div>
<span class="t" style="left:547.50px;top:673px;font:bold 21.5px 'Liberation Sans', sans-serif;line-height:1;color:#1c1a1d;letter-spacing:2.474px;">ПИСЬМЕННИК</span>
<svg style="left:1239.0px;top:207.7px" width="18" height="18" viewBox="0 0 18 18"><circle cx="7.500" cy="7.500" r="6" fill="none" stroke="#6a6a6a" stroke-width="1.600"/><path d="M12 12l5 5" stroke="#6a6a6a" stroke-width="2"/><path d="M6.500 5l-2 2.500 2 2.500zM8.500 5l2 2.500-2 2.500z" fill="#6a6a6a"/></svg>
<div class="b" style="left:1237px;top:235px;width:22px;height:1px;background:#d0d0d0;"></div>
<svg style="left:1239.0px;top:244.8px" width="18" height="18" viewBox="0 0 18 18"><path d="M4 3.500v-2h7.500l4 4v11h-11.500v-8" fill="#f9d7dc" stroke="#e0364b" stroke-width="1.500"/><path d="M11.500 1.500v4h4" fill="none" stroke="#e0364b" stroke-width="1.300"/><rect x="1" y="3.500" width="6.500" height="4.500" fill="#e0364b"/></svg>
<svg style="left:1239.0px;top:282.0px" width="18" height="18" viewBox="0 0 18 18"><path d="M1 4.500h5l2 2v6h-7z" fill="#d9d9f7" stroke="#6767e5" stroke-width="1.400"/><path d="M10.500 2.500h4.500l2 2v7h-6.500z" fill="#fff" stroke="#6767e5" stroke-width="1.400"/><path d="M3 2.500h3.500M9 10.500v3.500" stroke="#6767e5" stroke-width="1.600"/><path d="M5.500 13.200h7l-3.500 4z" fill="#6767e5"/></svg>
<svg style="left:1239.0px;top:317.3px" width="18" height="18" viewBox="0 0 18 18"><rect x=".8" y=".8" width="16.400" height="5.800" fill="#f2d0e4" stroke="#d6338a" stroke-width="1.500"/><rect x=".8" y="9.500" width="7" height="7" fill="#f2d0e4" stroke="#d6338a" stroke-width="1.500"/><path d="M10.500 10.500h7M10.500 13h7M10.500 15.500h7" stroke="#d6338a" stroke-width="1"/></svg>
<svg style="left:1239.0px;top:353.5px" width="18" height="18" viewBox="0 0 18 18"><path d="M2 1h6.500l4 4v4.500M12.500 14.500v1.500h-10.500v-15" fill="#d5eef0" stroke="#14929a" stroke-width="1.500"/><path d="M8.500 1v4h4" fill="none" stroke="#14929a" stroke-width="1.300"/><path d="M8 12.500h8M13.500 9.800l2.700 2.700-2.700 2.700" fill="none" stroke="#14929a" stroke-width="1.600"/></svg>
<svg style="left:1239.0px;top:389.7px" width="18" height="18" viewBox="0 0 18 18"><rect x="10" y="1" width="6.500" height="15.500" fill="#d9eef0" stroke="#7dbb42" stroke-width="1.500"/><rect x="1" y="8.500" width="7" height="8" fill="none" stroke="#7dbb42" stroke-width="1.400" stroke-dasharray="2 1.300"/><path d="M7.500 7l-5-5M2.200 5.800v-3.800h3.800" fill="none" stroke="#7dbb42" stroke-width="1.600"/></svg>
<svg style="left:1239.0px;top:426.0px" width="18" height="18" viewBox="0 0 18 18"><path d="M1.500 1h7l4 4v11h-11z" fill="#faecc0" stroke="#e0b416" stroke-width="1.500"/><path d="M8.500 1v4h4" fill="none" stroke="#e0b416" stroke-width="1.300"/><path d="M9.500 9.500h8v6h-4.500l-2 2v-2h-1.500z" fill="#e0b416"/><path d="M11.500 11.500h4M11.500 13.500h4" stroke="#fff" stroke-width=".8"/></svg>
<svg style="left:1239.0px;top:462.0px" width="18" height="18" viewBox="0 0 18 18"><path d="M2 1.500h14a1 1 0 0 1 1 1v9a1 1 0 0 1-1 1h-7.500l-3 3.500v-3.500h-3.500a1 1 0 0 1-1-1v-9a1 1 0 0 1 1-1z" fill="#d9b72e"/><path d="M4.500 5.500h9M4.500 8.500h7" stroke="#fff" stroke-width="1.200"/></svg>
<svg style="left:1239.0px;top:498.5px" width="18" height="18" viewBox="0 0 18 18"><path d="M1 16l2-5.500 8.500-8.500c1.500-1.500 4 1 2.500 2.500l-8.500 8.500z" fill="#ead5ee" stroke="#8a54d8" stroke-width="1.500"/><path d="M1 16.500h6c1-3 2.500-5 3-3s.3 3.500 1.500 1.500 1.500-1.500 2 0 2 1 3.500 0" fill="none" stroke="#8a54d8" stroke-width="1.300"/></svg>
<svg style="left:1239.0px;top:534.0px" width="18" height="18" viewBox="0 0 18 18"><path d="M1 5l3.500 3.500M4.500 5l-3.500 3.500" stroke="#8a54d8" stroke-width="1.300"/><path d="M6.500 10c1.500-3 3-7.500 3.500-7.500s-.5 6-.5 8c.8-2 1.700-3 2.200-2s.3 2.500 1.200 1.200 1.500-1.200 2 0 1 .8 2 0" fill="none" stroke="#8a54d8" stroke-width="1.400"/><path d="M1 14.500h16" stroke="#8a54d8" stroke-width="1.500"/></svg>
<svg style="left:1239.0px;top:571.0px" width="18" height="18" viewBox="0 0 18 18"><path d="M4.500 7.500v-6.500h5.500l3.500 3.500v3" fill="#fff" stroke="#3faa4c" stroke-width="1.500"/><rect x="1" y="7.500" width="16" height="5.500" rx="1" fill="#3faa4c"/><rect x="4.500" y="10" width="9" height="7" fill="#fff" stroke="#3faa4c" stroke-width="1.300" stroke-dasharray="1.500 1.200"/><path d="M15.500 0v4M13.500 2h4" stroke="#3faa4c" stroke-width="1"/></svg>
<svg style="left:1239.0px;top:607.0px" width="18" height="18" viewBox="0 0 18 18"><path d="M9 1l7 2.500v5c0 4.500-3 7-7 9-4-2-7-4.500-7-9v-5z" fill="#fff" stroke="#5b6af0" stroke-width="1.600"/><path d="M9 1.800l-6.200 2.300v4.400c0 4 2.600 6.200 6.200 8z" fill="#dcdff9"/></svg>
<svg style="left:1238.5px;top:643.0px" width="19" height="19" viewBox="0 0 19 19"><path d="M2 14.500l7-7a3.800 3.800 0 0 1 4.500-4.800l-2.300 2.300.5 2.300 2.300.5 2.300-2.300a3.800 3.800 0 0 1-4.800 4.500l-7 7c-1.500 1.500-4-1-2.500-2.500z" fill="#6a6a6a" transform="translate(-1,-2.500) scale(.9)"/><circle cx="13" cy="13.500" r="4.300" fill="#6a6a6a" stroke="#fcfcfc" stroke-width="1"/><path d="M10.800 13.500h4.400M13 11.300v4.400" stroke="#fff" stroke-width="1.300"/></svg>
<div class="b" style="left:1237px;top:739px;width:23px;height:1px;background:#d0d0d0;"></div>
<svg style="left:1244px;top:751px" width="12" height="14" viewBox="0 0 12 14" fill="none" stroke="#555" stroke-width="1.500"><path d="M1.500 1v12M4.500 7h6.500M8 4l3 3-3 3"/></svg>
<div class="b" style="left:1351px;top:125px;width:176px;height:99px;overflow:hidden;background:#222"><svg style="left:0;top:0;filter:blur(.6px)" width="176" height="99" viewBox="0 0 176 99"><defs><linearGradient id="t1a" x1="0" x2="1"><stop offset="0" stop-color="#e6c8b2"/><stop offset=".45" stop-color="#eed7c7"/><stop offset="1" stop-color="#f0ddd0"/></linearGradient></defs>
<rect width="176" height="99" fill="url(#t1a)"/>
<rect x="146" y="0" width="15" height="99" fill="#f5e6d8"/><rect x="160" y="0" width="16" height="99" fill="#e4ebee"/><rect x="172" y="0" width="4" height="99" fill="#cfd9de"/>
<path d="M50 74V27C50 14 68 9 84 9c20 0 34 5 34 16v49z" fill="#d2a873"/>
<path d="M54.500 70V30c4-8 16-12 30-12 15 0 26 4 29 10v42z" fill="#ecd6bc"/>
<rect x="50" y="22" width="68" height="4" fill="#cf9e63"/><rect x="50" y="56" width="68" height="4.500" fill="#cf9e63"/>
<path d="M64 9c0-5 6-8 12-7 5-2 10 0 10 4s-4 5-10 5-12 1-12-2z" fill="#3f5b3c"/><ellipse cx="91" cy="4" rx="6" ry="5.500" fill="#b9aa8c"/><ellipse cx="91" cy="3" rx="3" ry="3" fill="#d9d2c0"/>
<rect x="52" y="29" width="24" height="26" fill="#e6e1b9"/><circle cx="58" cy="35" r="3" fill="#80857c"/><circle cx="63" cy="38" r="2.500" fill="#6e736c"/><circle cx="67" cy="35" r="2.500" fill="#a9b2b8"/><path d="M55 44h18M55 47h18M56 50h14" stroke="#b9b48e" stroke-width="1"/>
<rect x="76" y="36" width="8" height="19" fill="#4d5c7a"/>
<path d="M38 99V68l18-3 6 34z" fill="#aac0dc"/><path d="M42 70l10-2 3 18-11 4z" fill="#e9eef6"/><path d="M41 80l12-3" stroke="#c0392b" stroke-width="1.500"/>
<path d="M54 99c0-14 8-23 24-26l10-8h16l10 8c17 4 29 12 33 26z" fill="#525f52"/>
<path d="M70 99c2-8 4-14 8-20M124 99c-2-8-4-14-8-20" stroke="#455045" stroke-width="1.500" fill="none"/>
<rect x="88" y="54" width="16" height="15" fill="#bf927b"/>
<ellipse cx="96.500" cy="43" rx="14.500" ry="20.500" fill="#cba18a"/>
<path d="M89 40h5M100 40h5" stroke="#5a4238" stroke-width="1.300"/><path d="M93 55h8" stroke="#a87868" stroke-width="1"/><path d="M96.500 42v7" stroke="#b98a74" stroke-width="1.200"/>
<path d="M80.500 40c-3-16 5-25 16.500-25 11 0 18.500 8 15.500 24-1.500-8-4-11.500-7-13-6 2.500-14 2.500-19 1-3 3.500-4.500 7-6 13z" fill="#38312c"/>
<path d="M87 67l9.500 7 9.500-7 1 8h-21z" fill="#39423a"/>
</svg></div>
<div class="b" style="left:1351px;top:205px;width:106px;height:19px;background:rgba(28,28,28,.68);"></div>
<svg style="left:1353px;top:205px" width="16" height="17" viewBox="0 0 16 17"><path d="M5 6a3.300 3.300 0 0 1 6.600 0v4.500a3.300 3.300 0 0 1-6.600 0z" fill="#f2514f"/><path d="M7.500 13h1.600v1.700h-1.600z" fill="#f2514f"/><rect x="5" y="14.300" width="6.600" height="1.400" rx=".5" fill="#f2514f"/><path d="M1.500 16L14.800 2.500" stroke="#f2514f" stroke-width="1.300"/><path d="M2.300 16.800L15.600 3.300" stroke="#5e5e5e" stroke-width=".7"/></svg>
<span class="t" style="left:1373.00px;top:208px;font:normal 13px 'Liberation Sans', sans-serif;line-height:1;color:#fff;letter-spacing:0.060px;text-shadow:0 0 1px #00103a,0 0 1px #00103a,.5px .5px 0 #3a1800;">Ігор Стамбол</span>
<div class="b" style="left:1351px;top:230px;width:176px;height:99px;overflow:hidden;background:#222"><svg style="left:0;top:0;filter:blur(.6px)" width="176" height="99" viewBox="0 0 176 99"><defs><linearGradient id="t2a" x1="0" x2="1"><stop offset="0" stop-color="#dbe5e6"/><stop offset=".3" stop-color="#ede4e4"/><stop offset=".7" stop-color="#efe4e2"/><stop offset="1" stop-color="#e9e3e0"/></linearGradient></defs>
<rect width="176" height="99" fill="url(#t2a)"/>
<rect x="158" y="0" width="9" height="99" fill="#f4f3f6"/><rect x="166.500" y="0" width="10" height="99" fill="#a9743c"/><rect x="170" y="0" width="2" height="99" fill="#c08a4c"/>
<path d="M70 99C70 72 72 46 80 35c6-8 12-11 18-11 12 0 22 8 28 24 6 16 10 32 14 51z" fill="#8d4e33"/>
<path d="M84 99c0-4 4-7 10-8l4-6h10l4 6c12 2 22 4 28 8z" fill="#2f2a27"/>
<path d="M83 60c0-10 6-16 14.500-16s14.500 6 14.500 16c0 14-6 28-14.500 28s-14.500-14-14.500-28z" fill="#c99a84"/>
<path d="M80 60c0-20 6-32 18-34 14 2 20 16 21 34-3-6-6-9-10-10-4 2-8 2-12 1-6 1-12 3-17 9z" fill="#9a5837"/>
<path d="M86 62h8M101 62h8" stroke="#5a3a30" stroke-width="1.400"/><path d="M93 79h9" stroke="#a06a5e" stroke-width="1.200"/><path d="M97 64v9" stroke="#b88672" stroke-width="1.200"/>
</svg></div>
<div class="b" style="left:1351px;top:310px;width:134px;height:19px;background:rgba(28,28,28,.68);"></div>
<svg style="left:1353px;top:310px" width="16" height="17" viewBox="0 0 16 17"><path d="M5 6a3.300 3.300 0 0 1 6.600 0v4.500a3.300 3.300 0 0 1-6.600 0z" fill="#f2514f"/><path d="M7.500 13h1.600v1.700h-1.600z" fill="#f2514f"/><rect x="5" y="14.300" width="6.600" height="1.400" rx=".5" fill="#f2514f"/><path d="M1.500 16L14.800 2.500" stroke="#f2514f" stroke-width="1.300"/><path d="M2.300 16.800L15.600 3.300" stroke="#5e5e5e" stroke-width=".7"/></svg>
<span class="t" style="left:1373.00px;top:313px;font:normal 13px 'Liberation Sans', sans-serif;line-height:1;color:#fff;letter-spacing:-0.027px;text-shadow:0 0 1px #00103a,0 0 1px #00103a,.5px .5px 0 #3a1800;">Natalya Adamchuk</span>
<div class="b" style="left:1351px;top:335px;width:176px;height:99px;overflow:hidden;background:#222"><svg style="left:0;top:0;filter:blur(.6px)" width="176" height="99" viewBox="0 0 176 99"><defs><linearGradient id="t3a" x1="0" x2="1"><stop offset="0" stop-color="#adadab"/><stop offset=".35" stop-color="#cfcfcd"/><stop offset="1" stop-color="#eae8e5"/></linearGradient><radialGradient id="t3b" cx=".9" cy=".5" r=".45"><stop offset="0" stop-color="#f8f6f3" stop-opacity=".95"/><stop offset=".6" stop-color="#f4f2ef" stop-opacity=".6"/><stop offset="1" stop-color="#f0eeeb" stop-opacity="0"/></radialGradient></defs>
<rect width="176" height="99" fill="url(#t3a)"/>
<rect width="176" height="99" fill="url(#t3b)"/>
<path d="M60 99c4-26 18-60 44-67 20-4 36 8 44 30 4 10 14 16 28 22v15z" fill="#763a24"/>
<path d="M100 38c10-6 22-4 30 4-5 10-6 22-3 36-8-10-18-14-30-9 5-9 6-20 3-31z" fill="#955232"/>
<path d="M112 34c4-2 10-2 14 1l-6 8z" fill="#c9b8a8"/>
<path d="M94 99c0-14 8-22 20-23 12 0 20 8 22 23z" fill="#dcab90"/>
<path d="M100 84c4-2 8-2 12 0M120 84c4-2 8-1 11 1" stroke="#5a3a2e" stroke-width="1.500" fill="none"/>
<path d="M130 70c8 6 16 16 18 29h-12c0-10-2-20-6-29z" fill="#6a331f"/>
<path d="M150 99c4-8 14-12 26-12v12z" fill="#56669a"/>
</svg></div>
<div class="b" style="left:1351px;top:415px;width:111px;height:19px;background:rgba(28,28,28,.68);"></div>
<svg style="left:1353px;top:415px" width="16" height="17" viewBox="0 0 16 17"><path d="M5 6a3.300 3.300 0 0 1 6.600 0v4.500a3.300 3.300 0 0 1-6.600 0z" fill="#f2514f"/><path d="M7.500 13h1.600v1.700h-1.600z" fill="#f2514f"/><rect x="5" y="14.300" width="6.600" height="1.400" rx=".5" fill="#f2514f"/><path d="M1.500 16L14.800 2.500" stroke="#f2514f" stroke-width="1.300"/><path d="M2.300 16.800L15.600 3.300" stroke="#5e5e5e" stroke-width=".7"/></svg>
<span class="t" style="left:1373.00px;top:418px;font:normal 13px 'Liberation Sans', sans-serif;line-height:1;color:#fff;letter-spacing:-0.070px;text-shadow:0 0 1px #00103a,0 0 1px #00103a,.5px .5px 0 #3a1800;">Олена Бровко</span>
<div class="b" style="left:1351px;top:440px;width:176px;height:99px;overflow:hidden;background:#222"><svg style="left:0;top:0;filter:blur(.6px)" width="176" height="99" viewBox="0 0 176 99">
<rect width="176" height="99" fill="#f0f0ef"/>
<g fill="#d9d9d6"><rect x="13" y="1" width="49" height="22"/><rect x="81" y="1" width="38" height="24"/><rect x="135" y="1" width="32" height="30"/>
<rect x="11" y="33" width="51" height="28"/><rect x="81" y="36" width="38" height="26"/><rect x="135" y="40" width="32" height="24"/>
<rect x="11" y="73" width="48" height="26"/><rect x="81" y="74" width="38" height="25"/><rect x="137" y="73" width="30" height="26"/></g>
<rect x="20" y="7" width="10" height="15" fill="#8f8378"/><rect x="30" y="5" width="14" height="17" fill="#b9a58e"/><rect x="33" y="8" width="8" height="11" fill="#8a97b8"/><rect x="46" y="10" width="14" height="12" fill="#9a9288"/>
<rect x="81" y="9" width="9" height="17" fill="#6b5356"/><rect x="90" y="11" width="8" height="15" fill="#5a7f9e"/><rect x="98" y="13" width="8" height="13" fill="#7a6a7a"/><rect x="110" y="17" width="6" height="11" fill="#6e6a50"/>
<rect x="136" y="17" width="6" height="14" fill="#8a7a78"/><path d="M142 20l8 11h-8z" fill="#5a4448"/><rect x="150" y="23" width="8" height="9" fill="#4a5660"/>
<ellipse cx="22" cy="48" rx="11" ry="12" fill="#bdbdc2"/><rect x="45" y="37" width="15" height="23" fill="#6f7a72"/><rect x="48" y="40" width="10" height="12" fill="#b9bdb6"/>
<rect x="80" y="46" width="8" height="15" fill="#3a6c8c"/>
<rect x="136" y="46" width="5" height="16" fill="#2e3a48"/><rect x="142" y="49" width="8" height="13" fill="#3f6f8e"/><rect x="152" y="52" width="6" height="10" fill="#5a4a50"/>
<rect x="140" y="78" width="9" height="21" fill="#b7ad9f"/><rect x="149" y="78" width="6" height="21" fill="#5c6670"/><rect x="156" y="80" width="8" height="19" fill="#d6d0c0"/>
<circle cx="63.500" cy="66.500" r="1.500" fill="#6a5a40"/><circle cx="124.500" cy="67" r="1.500" fill="#6a5a40"/><circle cx="135" cy="67" r="1.500" fill="#6a5a40"/>
<path d="M58 99c6-10 18-14 30-16l3-10h24l2 10c12 2 20 8 23 16z" fill="#9e1b29"/>
<ellipse cx="103" cy="57" rx="19.500" ry="16.500" fill="#d6a766"/>
<ellipse cx="103" cy="68" rx="12.500" ry="15.500" fill="#d8a38b"/>
<path d="M88 62c0-10 6-15 15-15s15 5 15 15c-3-5-6-7-10-8-5 2-10 2-14 0-3 2-5 4-6 8z" fill="#dcae6e"/>
<path d="M94 66h7M106 66h7" stroke="#6a4a3c" stroke-width="1.300"/><path d="M99 79h9" stroke="#a86a5c" stroke-width="1.200"/>
<path d="M89 84c4 4 10 6 14 6s10-2 14-6l1 8h-30z" fill="#8e1524"/>
</svg></div>
<div class="b" style="left:1351px;top:520px;width:94px;height:19px;background:rgba(28,28,28,.68);"></div>
<svg style="left:1353px;top:520px" width="16" height="17" viewBox="0 0 16 17"><path d="M5 6a3.300 3.300 0 0 1 6.600 0v4.500a3.300 3.300 0 0 1-6.600 0z" fill="#f2514f"/><path d="M7.500 13h1.600v1.700h-1.600z" fill="#f2514f"/><rect x="5" y="14.300" width="6.600" height="1.400" rx=".5" fill="#f2514f"/><path d="M1.500 16L14.800 2.500" stroke="#f2514f" stroke-width="1.300"/><path d="M2.300 16.800L15.600 3.300" stroke="#5e5e5e" stroke-width=".7"/></svg>
<span class="t" style="left:1373.00px;top:523px;font:normal 13px 'Liberation Sans', sans-serif;line-height:1;color:#fff;letter-spacing:0.034px;text-shadow:0 0 1px #00103a,0 0 1px #00103a,.5px .5px 0 #3a1800;">Лідія Кавун</span>
<div class="b" style="left:1351px;top:545px;width:176px;height:99px;overflow:hidden;background:#222"><svg style="left:0;top:0;filter:blur(.6px)" width="176" height="99" viewBox="0 0 176 99">
<rect width="176" height="99" fill="#dcd8d5"/>
<rect x="49" y="11" width="7" height="11" fill="#d9d0bc"/>
<path d="M0 70l52-6 40 4v31H0z" fill="#b78849"/>
<rect x="83" y="0" width="93" height="99" fill="#b88d52"/>
<rect x="88" y="5" width="47" height="22" fill="#dfe4ea"/><rect x="140" y="5" width="36" height="22" fill="#dfe4ea"/>
<rect x="88" y="31" width="47" height="21" fill="#dfe4ea"/><rect x="140" y="31" width="36" height="21" fill="#dfe4ea"/>
<rect x="88" y="56" width="47" height="20" fill="#dfe4ea"/><rect x="140" y="56" width="36" height="20" fill="#e3e6ea"/>
<rect x="83" y="78" width="93" height="21" fill="#c8954d"/>
<rect x="101" y="14" width="24" height="13" fill="#4b4450"/><rect x="106" y="14" width="4" height="13" fill="#b9a9a0"/><rect x="116" y="14" width="3" height="13" fill="#8a9ab0"/>
<path d="M140 10l8-3 4 20h-12z" fill="#39424e"/><rect x="152" y="15" width="6" height="12" fill="#9a5a50"/><rect x="158" y="16" width="8" height="11" fill="#3e4c66"/><path d="M166 15l9-4 1 16h-8z" fill="#8a5a3a"/>
<rect x="114" y="40" width="8" height="12" fill="#6a4a48"/><path d="M124 52l6-14 2 1-3 13z" fill="#39523c"/>
<rect x="139" y="38" width="6" height="14" fill="#2f3e58"/><rect x="146" y="35" width="14" height="17" fill="#c98466"/><rect x="148" y="36" width="10" height="7" fill="#e4d6c8"/><rect x="161" y="39" width="6" height="13" fill="#3c4a40"/><rect x="167" y="38" width="9" height="14" fill="#6a6040"/>
<rect x="115" y="56" width="20" height="20" fill="#1f5a50"/><rect x="121" y="57" width="1.500" height="19" fill="#123c36"/><rect x="128" y="57" width="1.500" height="19" fill="#123c36"/>
<rect x="139" y="70" width="16" height="6" fill="#e6dcc0"/><rect x="170" y="66" width="6" height="10" fill="#55606a"/>
<path d="M43 99c4-14 16-20 30-23h30c16 3 30 10 35 23z" fill="#34352f"/>
<path d="M60 82h70M52 90h84M70 76v23M86 76v23M104 76v23M120 80v19" stroke="#a9a796" stroke-width=".8"/>
<path d="M66 99l2-24 10 6 8 18zM100 99l2-20 8 3 2 17z" fill="#e8e6e2"/>
<path d="M49 70c4-10 8-20 10-34 2-14 12-21 28-21 18 0 27 10 28 26 1 12 2 22 2 32-10 6-20 6-32 4-12 0-24-2-36-7z" fill="#2d2523"/>
<ellipse cx="87" cy="52" rx="16" ry="22" fill="#c9a08c"/>
<path d="M69 44c2-12 8-17 18-18 12 1 18 8 19 20-8-8-14-12-22-12-6 2-10 5-15 10z" fill="#2d2523"/>
<g fill="none" stroke="#4a3a38" stroke-width="1.300"><ellipse cx="78" cy="48" rx="8" ry="6.500"/><ellipse cx="96" cy="50" rx="8" ry="6.500"/></g>
</svg></div>
<div class="b" style="left:1351px;top:625px;width:100px;height:19px;background:rgba(28,28,28,.68);"></div>
<svg style="left:1353px;top:625px" width="16" height="17" viewBox="0 0 16 17"><path d="M5 6a3.300 3.300 0 0 1 6.600 0v4.500a3.300 3.300 0 0 1-6.600 0z" fill="#f2514f"/><path d="M7.500 13h1.600v1.700h-1.600z" fill="#f2514f"/><rect x="5" y="14.300" width="6.600" height="1.400" rx=".5" fill="#f2514f"/><path d="M1.500 16L14.800 2.500" stroke="#f2514f" stroke-width="1.300"/><path d="M2.300 16.800L15.600 3.300" stroke="#5e5e5e" stroke-width=".7"/></svg>
<span class="t" style="left:1373.00px;top:628px;font:normal 13px 'Liberation Sans', sans-serif;line-height:1;color:#fff;letter-spacing:-0.341px;text-shadow:0 0 1px #00103a,0 0 1px #00103a,.5px .5px 0 #3a1800;">Руснак Ірина</span>
<div class="b" style="left:1351px;top:650px;width:176px;height:99px;overflow:hidden;background:#222"><svg style="left:0;top:0;filter:blur(.6px)" width="176" height="99" viewBox="0 0 176 99">
<rect width="176" height="99" fill="#222"/>
<rect x="22" y="0" width="132" height="99" fill="#c9c5c9"/>
<rect x="72" y="0" width="82" height="14" fill="#9c9ca2"/>
<path d="M22 0h42l10 22v64H22z" fill="#a54a1b"/>
<rect x="23" y="4" width="7" height="78" fill="#26342c"/><rect x="37" y="15" width="12" height="58" fill="#23382e"/>
<path d="M38 22h10v10h-10zM38 44h10v14h-10z" fill="#5a9ab8"/><path d="M38 34h10v8h-10z" fill="#8ab070"/>
<rect x="52" y="16" width="3" height="60" fill="#7a3410"/><rect x="60" y="30" width="10" height="28" fill="#3a2a20"/>
<rect x="135" y="32" width="19" height="52" fill="#a65a2a"/><rect x="143" y="40" width="11" height="36" fill="#d9cdb4"/>
<path d="M143 46h11M143 52h11M143 58h11M143 64h11M143 70h11M147 40v36M151 40v36" stroke="#8a6a48" stroke-width=".7"/>
<path d="M36 99V86c10-16 26-24 44-28l34-3c14 4 22 18 24 44z" fill="#7a7ab2"/>
<path d="M113 55l12 2 29 24v18h-16c-4-18-12-34-25-44z" fill="#b83f8c"/>
<path d="M122 60l30 26M118 66l30 30" stroke="#e8d8e8" stroke-width="1.200"/><path d="M128 64l26 24" stroke="#3a3a8a" stroke-width="1"/>
<ellipse cx="96" cy="28" rx="28" ry="27" fill="#d9d3c0"/>
<path d="M68 30c-2 12 2 20 8 24l4-22zM124 30c2 12-2 20-8 24l-4-22z" fill="#d0c9b4"/>
<ellipse cx="95" cy="39" rx="15" ry="20" fill="#c99a8a"/>
<path d="M78 30c2-10 8-14 18-14s16 4 18 14c-6-4-12-6-18-6s-12 2-18 6z" fill="#e0dac8"/>
<g fill="none" stroke="#6a5a58" stroke-width=".9"><ellipse cx="87" cy="36" rx="7" ry="5"/><ellipse cx="104" cy="36" rx="7" ry="5"/></g>
<path d="M82 56c8 6 20 6 28 0v6c-8 4-20 4-28 0z" fill="#6c6ca4"/>
</svg></div>
<div class="b" style="left:1351px;top:730px;width:151.4000000000001px;height:19px;background:rgba(28,28,28,.68);"></div>
<svg style="left:1353px;top:730px" width="16" height="17" viewBox="0 0 16 17"><path d="M5 6a3.300 3.300 0 0 1 6.600 0v4.500a3.300 3.300 0 0 1-6.600 0z" fill="#f2514f"/><path d="M7.500 13h1.600v1.700h-1.600z" fill="#f2514f"/><rect x="5" y="14.300" width="6.600" height="1.400" rx=".5" fill="#f2514f"/><path d="M1.500 16L14.800 2.500" stroke="#f2514f" stroke-width="1.300"/><path d="M2.300 16.800L15.600 3.300" stroke="#5e5e5e" stroke-width=".7"/></svg>
<span class="t" style="left:1373.00px;top:733px;font:normal 13px 'Liberation Sans', sans-serif;line-height:1;color:#fff;letter-spacing:-0.022px;text-shadow:0 0 1px #00103a,0 0 1px #00103a,.5px .5px 0 #3a1800;">Людмила Даниленко</span>
<svg style="left:38px;top:803px" width="26" height="26" viewBox="0 0 26 26"><rect x="9.800" y="2.300" width="7.400" height="14" rx="3.700" fill="#a6a6a6"/><path d="M6.800 12.500a6.700 6.700 0 0 0 13.400 0M13.500 19.500v3.500M10 23.300h7" fill="none" stroke="#a6a6a6" stroke-width="1.500"/><path d="M1.500 24.300L24.500 1.500" stroke="#e8474c" stroke-width="1.600"/></svg>
<svg style="left:84px;top:812.5px" width="10" height="7" viewBox="0 0 10 7"><path d="M1.500 5.500l3.500-3.800 3.500 3.800" fill="none" stroke="#c8c8c8" stroke-width="1.400"/></svg>
<span class="t" style="left:10.70px;top:834px;font:normal 11.5px 'Liberation Sans', sans-serif;line-height:1;color:#dadada;letter-spacing:0.483px;-webkit-text-stroke:.3px #dadada;">Включить звук</span>
<svg style="left:148px;top:808px" width="25" height="16" viewBox="0 0 25 16"><rect x="0" y=".5" width="17" height="14.500" rx="3.500" fill="#a6a6a6"/><path d="M18 6l5-3.500a.8.800 0 0 1 1.200.7v9.600a.8.800 0 0 1-1.200.7l-5-3.500z" fill="#a6a6a6"/></svg>
<svg style="left:202px;top:812.5px" width="10" height="7" viewBox="0 0 10 7"><path d="M1.500 5.500l3.500-3.800 3.500 3.800" fill="none" stroke="#c8c8c8" stroke-width="1.400"/></svg>
<span class="t" style="left:109.00px;top:834px;font:normal 11.5px 'Liberation Sans', sans-serif;line-height:1;color:#dadada;letter-spacing:0.267px;-webkit-text-stroke:.3px #dadada;">Остановить видео</span>
<svg style="left:352px;top:806px" width="25" height="20" viewBox="0 0 25 20"><circle cx="8.500" cy="5.500" r="4.300" fill="#a6a6a6"/><path d="M0 18.500c0-5 3.500-7.500 8.500-7.500s8.500 2.500 8.500 7.500c0 .6-.4 1-1 1h-15c-.6 0-1-.4-1-1z" fill="#a6a6a6"/><circle cx="18" cy="6.500" r="3.500" fill="#a6a6a6"/><path d="M18.500 19.500c.3-3-.5-5.500-2.500-7.300 5-1 8.500 1.500 8.500 6.300 0 .6-.4 1-1 1z" fill="#a6a6a6"/></svg>
<span class="t" style="left:380.00px;top:808px;font:normal 12px 'Liberation Sans', sans-serif;line-height:1;color:#e4e4e4;letter-spacing:0.141px;">83</span>
<svg style="left:412px;top:812.5px" width="10" height="7" viewBox="0 0 10 7"><path d="M1.500 5.500l3.500-3.800 3.500 3.800" fill="none" stroke="#c8c8c8" stroke-width="1.400"/></svg>
<span class="t" style="left:335.00px;top:834px;font:normal 11.5px 'Liberation Sans', sans-serif;line-height:1;color:#dadada;letter-spacing:0.381px;-webkit-text-stroke:.3px #dadada;">Участники</span>
<svg style="left:464px;top:807px" width="21" height="19" viewBox="0 0 21 19"><path d="M5 0h11a5 5 0 0 1 5 5v3.500a5 5 0 0 1-5 5h-6.500l-5 4.500v-4.500a5 5 0 0 1-4.500-5v-3.500a5 5 0 0 1 5-5z" fill="#a6a6a6"/></svg>
<svg style="left:502px;top:812.5px" width="10" height="7" viewBox="0 0 10 7"><path d="M1.500 5.500l3.500-3.800 3.500 3.800" fill="none" stroke="#c8c8c8" stroke-width="1.400"/></svg>
<span class="t" style="left:464.00px;top:834px;font:normal 11.5px 'Liberation Sans', sans-serif;line-height:1;color:#dadada;letter-spacing:-0.289px;-webkit-text-stroke:.3px #dadada;">Чат</span>
<div class="b" style="left:576px;top:807px;width:24.3px;height:18px;background:#23d959;border-radius:3.500px"></div>
<svg style="left:583px;top:810.5px" width="10" height="11" viewBox="0 0 10 11"><path d="M5 10.500v-8.500M1.300 5.500l3.700-3.700 3.700 3.700" fill="none" stroke="#111" stroke-width="1.900"/></svg>
<span class="t" style="left:527.00px;top:834px;font:normal 11.5px 'Liberation Sans', sans-serif;line-height:1;color:#23d959;letter-spacing:0.277px;-webkit-text-stroke:.3px #23d959;">Демонстрация экрана</span>
<svg style="left:688px;top:804px" width="21" height="23" viewBox="0 0 21 23"><path d="M3.500 0h10.500l7 7v12.500a3.500 3.500 0 0 1-3.500 3.500h-14a3.500 3.500 0 0 1-3.500-3.500v-16a3.500 3.500 0 0 1 3.500-3.500z" fill="#a6a6a6"/><path d="M14 0v4.500a2.500 2.500 0 0 0 2.500 2.500h4.500z" fill="#1a1a1a" opacity=".55"/><path d="M8.500 10.500c.5 3 1.500 4 4.500 4.500-3 .5-4 1.500-4.500 4.500-.5-3-1.500-4-4.500-4.500 3-.5 4-1.500 4.500-4.500zM14 9.500c.2 1.300.7 1.800 2 2-1.300.2-1.800.7-2 2-.2-1.300-.7-1.800-2-2 1.300-.2 1.800-.7 2-2z" fill="#1a1a1a"/></svg>
<span class="t" style="left:678.00px;top:834px;font:normal 11.5px 'Liberation Sans', sans-serif;line-height:1;color:#dadada;letter-spacing:0.234px;-webkit-text-stroke:.3px #dadada;">Сводка</span>
<svg style="left:771px;top:803px" width="27" height="27" viewBox="0 0 27 27"><path d="M12.500 2.500c1.600 6.600 4.400 9.500 11.500 11.200-7.100 1.700-9.900 4.600-11.500 11.300-1.600-6.700-4.400-9.600-11.500-11.300 7.100-1.700 9.900-4.600 11.500-11.200z" fill="#a6a6a6" stroke="#a6a6a6" stroke-width="1" stroke-linejoin="round"/><path d="M21 .8c.5 2.700 1.400 3.600 4 4-2.600.5-3.500 1.400-4 4-.5-2.600-1.400-3.500-4-4 2.600-.4 3.500-1.300 4-4z" fill="#a6a6a6"/></svg>
<span class="t" style="left:746.00px;top:834px;font:normal 11.5px 'Liberation Sans', sans-serif;line-height:1;color:#dadada;letter-spacing:0.330px;-webkit-text-stroke:.3px #dadada;">AI Companion</span>
<svg style="left:860px;top:805px" width="22" height="22" viewBox="0 0 22 22"><circle cx="11" cy="11" r="10" fill="none" stroke="#a6a6a6" stroke-width="1.200"/><circle cx="11" cy="11" r="7.700" fill="#a6a6a6"/></svg>
<span class="t" style="left:851.00px;top:834px;font:normal 11.5px 'Liberation Sans', sans-serif;line-height:1;color:#dadada;letter-spacing:0.253px;-webkit-text-stroke:.3px #dadada;">Запись</span>
<div class="b" style="left:960px;top:807px;width:24px;height:18px;background:#a6a6a6;border-radius:3.500px"></div>
<span class="t" style="left:963.50px;top:809px;font:bold 13px 'Liberation Sans', sans-serif;line-height:1;color:#1a1a1a;letter-spacing:2.531px;">cc</span>
<svg style="left:1016px;top:812.5px" width="10" height="7" viewBox="0 0 10 7"><path d="M1.500 5.500l3.500-3.800 3.500 3.800" fill="none" stroke="#c8c8c8" stroke-width="1.400"/></svg>
<span class="t" style="left:919.50px;top:834px;font:normal 11.5px 'Liberation Sans', sans-serif;line-height:1;color:#dadada;letter-spacing:0.192px;-webkit-text-stroke:.3px #dadada;">Показать субтитры</span>
<svg style="left:1062px;top:804px" width="24" height="24" viewBox="0 0 24 24"><circle cx="11" cy="13" r="9.300" fill="#a6a6a6"/><circle cx="18.500" cy="4.500" r="4.500" fill="#1a1a1a"/><path d="M19.600 1v6M16.600 4h6" stroke="#a6a6a6" stroke-width="1.300"/><circle cx="7.800" cy="10.800" r="1.300" fill="#1a1a1a"/><circle cx="14.200" cy="10.800" r="1.300" fill="#1a1a1a"/><path d="M6.500 14.500c1 2.300 2.700 3.300 4.500 3.300s3.500-1 4.500-3.300z" fill="#1a1a1a"/></svg>
<svg style="left:1096px;top:812.5px" width="10" height="7" viewBox="0 0 10 7"><path d="M1.500 5.500l3.500-3.800 3.500 3.800" fill="none" stroke="#c8c8c8" stroke-width="1.400"/></svg>
<span class="t" style="left:1050.00px;top:834px;font:normal 11.5px 'Liberation Sans', sans-serif;line-height:1;color:#dadada;letter-spacing:0.227px;-webkit-text-stroke:.3px #dadada;">Реакции</span>
<svg style="left:1148px;top:808px" width="18" height="18" viewBox="0 0 18 18"><g fill="none" stroke="#a6a6a6" stroke-width="1.600"><path d="M1.500 6.500v-2.500a3 3 0 0 1 3-3h3"/><path d="M16.500 11v2.500a3 3 0 0 1-3 3h-3"/><circle cx="13.500" cy="3.500" r="2.300"/><circle cx="3.800" cy="13.800" r="2.300"/></g></svg>
<span class="t" style="left:1121.50px;top:834px;font:normal 11.5px 'Liberation Sans', sans-serif;line-height:1;color:#dadada;letter-spacing:0.578px;-webkit-text-stroke:.3px #dadada;">Приложения</span>
<svg style="left:1251px;top:806px" width="21" height="18" viewBox="0 0 21 18"><path d="M9 14.500h-5.500a2.500 2.500 0 0 1-2.500-2.500v-8.500a2.500 2.500 0 0 1 2.500-2.500h13a2.500 2.500 0 0 1 2.500 2.500v7.500" fill="none" stroke="#a6a6a6" stroke-width="1.600"/><rect x="9.500" y="12.500" width="11" height="4.500" rx="2.200" fill="#a6a6a6"/></svg>
<span class="t" style="left:1210.00px;top:834px;font:normal 11.5px 'Liberation Sans', sans-serif;line-height:1;color:#dadada;letter-spacing:0.507px;-webkit-text-stroke:.3px #dadada;">Доски сообщений</span>
<svg style="left:1360px;top:806px" width="20" height="22" viewBox="0 0 20 22"><path d="M11 18.500h-5.500a2.500 2.500 0 0 1-2.500-2.500v-12.500a2.500 2.500 0 0 1 2.500-2.500h8.500a2.500 2.500 0 0 1 2.500 2.500v11" fill="none" stroke="#a6a6a6" stroke-width="1.500"/><path d="M1 5h3M1 8h3M1 11h3M1 14h3" stroke="#a6a6a6" stroke-width="1"/><path d="M7 5.500h7M7 8.500h7M7 11.500h4" stroke="#a6a6a6" stroke-width="1.300"/><rect x="8.500" y="16.500" width="11" height="4.500" rx="2.200" fill="#a6a6a6"/></svg>
<span class="t" style="left:1333.60px;top:834px;font:normal 11.5px 'Liberation Sans', sans-serif;line-height:1;color:#dadada;letter-spacing:0.444px;-webkit-text-stroke:.3px #dadada;">Примечания</span>
<div class="b" style="left:1526px;top:812px;width:62px;height:27px;background:#b3232a;border-radius:7px"></div>
<span class="t" style="left:1537.60px;top:819px;font:bold 13px 'Liberation Sans', sans-serif;line-height:1;color:#fff;letter-spacing:-1.261px;">Выйти</span>
<div class="b" style="left:0px;top:852px;width:1600px;height:1px;background:#cbc2ba;"></div>
<svg style="left:19px;top:864px;" width="26" height="18" viewBox="0 0 26 18"><defs><linearGradient id="cl" x1="0" y1="0" x2="0" y2="1"><stop offset="0" stop-color="#eaf2ff"/><stop offset="1" stop-color="#9fbff0"/></linearGradient></defs><path d="M6 17a5 5 0 0 1-.6-10 7 7 0 0 1 13.200 1.500 4.300 4.300 0 0 1 .4 8.500z" fill="url(#cl)" stroke="#8fb0e6" stroke-width=".6"/></svg>
<div class="b" style="left:30.5px;top:859px;width:15px;height:15px;background:#c42b1c;border-radius:50%"></div>
<span class="t" style="left:36.00px;top:862px;font:bold 10.5px 'Liberation Sans', sans-serif;line-height:1;color:#fff;">1</span>
<span class="t" style="left:51.00px;top:862px;font:normal 12px 'Liberation Sans', sans-serif;line-height:1;color:#1f1f1f;letter-spacing:-1.641px;">11°C</span>
<span class="t" style="left:51.00px;top:878px;font:normal 12px 'Liberation Sans', sans-serif;line-height:1;color:#5c5c5c;letter-spacing:-0.072px;">Cloudy</span>
<svg style="left:457px;top:865px;" width="23" height="23" viewBox="0 0 23 23"><defs><linearGradient id="wn" x1="0" y1="0" x2="1" y2="1"><stop offset="0" stop-color="#55c8f7"/><stop offset="1" stop-color="#0a74d2"/></linearGradient></defs><path d="M0 0h11v11h-11zM12 0h11v11h-11zM0 12h11v11h-11zM12 12h11v11h-11z" fill="url(#wn)"/></svg>
<div class="b" style="left:493.5px;top:860.5px;width:218.5px;height:31px;background:#fbf6f1;border-radius:15.500px;border:1px solid #e8dccf;box-shadow:0 1px 1px rgba(120,90,60,.15)"></div>
<svg style="left:503px;top:867px;" width="17" height="17" viewBox="0 0 17 17"><circle cx="7.500" cy="7.500" r="5.700" fill="none" stroke="#222" stroke-width="1.700"/><path d="M11.800 11.800l4 4" stroke="#222" stroke-width="1.900" stroke-linecap="round"/></svg>
<span class="t" style="left:530.50px;top:869px;font:normal 14px 'Liberation Sans', sans-serif;line-height:1;color:#5e5e5e;">Поиск</span>
<div class="b" style="left:725px;top:870.5px;width:18px;height:16px;background:#262626;border-radius:1.500px"></div>
<div class="b" style="left:731px;top:865px;width:18px;height:15.5px;background:linear-gradient(135deg,#c9c9c9,#f6f6f6);border-radius:1.500px;opacity:.95"></div>
<div class="b" style="left:778px;top:891.5px;width:6px;height:2.5px;background:#8c8782;border-radius:1.300px"></div>
<div class="b" style="left:822px;top:891.5px;width:6px;height:2.5px;background:#8c8782;border-radius:1.300px"></div>
<div class="b" style="left:910px;top:891.5px;width:6px;height:2.5px;background:#8c8782;border-radius:1.300px"></div>
<div class="b" style="left:997.8px;top:891.5px;width:6px;height:2.5px;background:#8c8782;border-radius:1.300px"></div>
<div class="b" style="left:1041.5px;top:891.5px;width:6px;height:2.5px;background:#8c8782;border-radius:1.300px"></div>
<div class="b" style="left:1085.8px;top:891.5px;width:6px;height:2.5px;background:#8c8782;border-radius:1.300px"></div>
<svg style="left:769px;top:864px;" width="25" height="25" viewBox="0 0 25 25"><defs><linearGradient id="eg" x1="0" y1="0" x2="0" y2="1"><stop offset="0" stop-color="#2ab3ee"/><stop offset=".55" stop-color="#1a7fd0"/><stop offset="1" stop-color="#0d4fa0"/></linearGradient><linearGradient id="eg2" x1="0" y1="1" x2="1" y2="0"><stop offset="0" stop-color="#2fbcd8"/><stop offset=".5" stop-color="#46d07a"/><stop offset="1" stop-color="#7be66a"/></linearGradient></defs><circle cx="12.500" cy="12.500" r="12" fill="url(#eg)"/><path d="M3.500 5.500a12 12 0 0 1 21 7c0 3.500-2.500 5.500-5.500 5.500h-5c2.500-1 3.500-3.200 2.500-5.500-1.200-2.700-4.500-4-8-3.500-2.500.4-4.500 1.800-6 3.500-.3-2.500 0-5 1-7z" fill="url(#eg2)"/><path d="M8.500 12.500c-1.500 3.500 0 8 4 10.500-5 .5-9.500-3-10.500-8 1-2.500 3.500-4 6.500-2.500z" fill="#0c4a9c"/><path d="M12.500 14.500c0 2.500 2.500 4.500 6 4 2.500-.4 4.500-1.500 5.500-3-.8 3.500-3.500 6.500-7 7.500-4-.5-6.500-4-6.500-7.500 0-1 .8-1.800 2-1z" fill="#1565b8"/><path d="M12.200 13.800c0-1.600 1.400-2.800 3.200-2.800 2 0 3.400 1.400 3.400 3.200 0 .8-.3 1.400-.8 1.800h7.200l-.8 2.800h-8c-2.400-.3-4.200-2.400-4.200-5z" fill="#f1e2d5"/></svg>
<svg style="left:812.5px;top:865.5px;" width="25" height="22" viewBox="0 0 25 22"><path d="M0 3a2 2 0 0 1 2-2h6.500l2.500 3h12a2 2 0 0 1 2 2v2h-25z" fill="#e8a61c"/><rect x="0" y="5" width="25" height="16.500" rx="1.800" fill="#ffd35a"/><path d="M0 13h25v6.500a2 2 0 0 1-2 2h-21a2 2 0 0 1-2-2z" fill="#f6c13a"/><rect x="6" y="15.500" width="13" height="6" rx="1.500" fill="#1d7fd4"/></svg>
<svg style="left:857px;top:865px;" width="25" height="23" viewBox="0 0 25 23"><path d="M12.500 0l12.500 8v14.500h-25v-14.500z" fill="#1470c4"/><path d="M3 8h19v9h-19z" fill="#f3f6fa"/><path d="M0 9l12.500 8 12.500-8v13.500h-25z" fill="#35a5ea"/><path d="M0 22.500l12.500-9 12.500 9z" fill="#1f8ee0"/></svg>
<svg style="left:901px;top:864px;" width="24" height="24" viewBox="0 0 24 24"><defs><linearGradient id="wp" x1="0" y1="0" x2="0" y2="1"><stop offset="0" stop-color="#ff4a30"/><stop offset="1" stop-color="#e0201a"/></linearGradient></defs><circle cx="12" cy="12" r="12" fill="url(#wp)"/><text x="12" y="17" font-family="Liberation Sans, sans-serif" font-weight="bold" font-size="14" fill="#fff" text-anchor="middle">W</text></svg>
<svg style="left:945px;top:864px;" width="25" height="24" viewBox="0 0 25 24"><circle cx="20.500" cy="5.500" r="2.800" fill="#5b5fc7"/><path d="M17 10h7.500v7a3.500 3.500 0 0 1-7 0z" fill="#5b5fc7"/><circle cx="13.500" cy="4.500" r="3.800" fill="#7b83eb"/><path d="M7.500 10h12v8.500a6 6 0 0 1-12 0z" fill="#7b83eb"/><rect x="0" y="6" width="13" height="13" rx="1.200" fill="#fff"/><rect x="0" y="6" width="13" height="13" rx="1.200" fill="#4b53bc" opacity=".08"/><text x="6.500" y="16.300" font-family="Liberation Sans, sans-serif" font-weight="bold" font-size="10" fill="#4b53bc" text-anchor="middle">T</text></svg>
<svg style="left:988.8px;top:864px;" width="24" height="24" viewBox="0 0 24 24"><circle cx="12" cy="12" r="12" fill="#fff"/><path d="M12 0a12 12 0 0 1 10.400 6h-10.400a6 6 0 0 0-5.200 3l-5.200-3a12 12 0 0 1 10.400-6z" fill="#e33b2e"/><path d="M22.400 6a12 12 0 0 1-10.400 18l5.200-9a6 6 0 0 0 0-6z" fill="#fbc116"/><path d="M1.600 6l5.200 9a6 6 0 0 0 5.200 3l-.0 6a12 12 0 0 1-10.400-18z" fill="#2da94f"/><path d="M12 24l5.200-9a6 6 0 0 1-5.200 3z" fill="#fbc116"/><circle cx="12" cy="12" r="5.500" fill="#fff"/><circle cx="12" cy="12" r="4.400" fill="#4285f4"/></svg>
<div class="b" style="left:1002px;top:859px;width:15.5px;height:15.5px;background:radial-gradient(circle at 45% 40%,#e8e8ea 0,#b9b4b4 45%,#6a6462 100%);border-radius:50%;border:1px solid #d8d8d8"></div>
<svg style="left:1032px;top:864px;" width="25" height="25" viewBox="0 0 25 25"><defs><linearGradient id="sk" x1="0" y1="0" x2="1" y2="1"><stop offset="0" stop-color="#2fc4f7"/><stop offset="1" stop-color="#0a84d8"/></linearGradient></defs><circle cx="7.500" cy="7.500" r="7" fill="url(#sk)"/><circle cx="17.500" cy="17.500" r="7" fill="url(#sk)"/><circle cx="12.500" cy="12.500" r="10.500" fill="url(#sk)"/><text x="12.500" y="18" font-family="Liberation Sans, sans-serif" font-weight="bold" font-size="15.500" fill="#fff" text-anchor="middle">S</text></svg>
<svg style="left:1076.8px;top:864px;" width="24" height="24" viewBox="0 0 24 24"><circle cx="12" cy="12" r="12" fill="#fff"/><path d="M12 0a12 12 0 0 1 10.400 6h-10.400a6 6 0 0 0-5.200 3l-5.200-3a12 12 0 0 1 10.400-6z" fill="#e33b2e"/><path d="M22.400 6a12 12 0 0 1-10.400 18l5.200-9a6 6 0 0 0 0-6z" fill="#fbc116"/><path d="M1.600 6l5.200 9a6 6 0 0 0 5.200 3l-.0 6a12 12 0 0 1-10.400-18z" fill="#2da94f"/><path d="M12 24l5.200-9a6 6 0 0 1-5.200 3z" fill="#fbc116"/><circle cx="12" cy="12" r="5.500" fill="#fff"/><circle cx="12" cy="12" r="4.400" fill="#4285f4"/></svg>
<div class="b" style="left:1149px;top:858px;width:3px;height:36px;background:#f7ece3;border-radius:0 4px 4px 0"></div>
<div class="b" style="left:1114px;top:857px;width:34.5px;height:38px;background:#f9f0e8;border-radius:4px;border:1px solid #efe2d6"></div>
<svg style="left:1120.5px;top:863px;" width="26" height="26" viewBox="0 0 26 26"><defs><linearGradient id="zm" x1="0" y1="0" x2="0" y2="1"><stop offset="0" stop-color="#1f6bff"/><stop offset="1" stop-color="#0b4be0"/></linearGradient></defs><circle cx="13" cy="13" r="13" fill="url(#zm)"/><text x="13" y="17" font-family="Liberation Sans, sans-serif" font-weight="bold" font-size="12" fill="#fff" text-anchor="middle">zm</text></svg>
<div class="b" style="left:1124.5px;top:892px;width:16px;height:2.8px;background:#0a6cd6;border-radius:1.400px"></div>
<svg style="left:1272px;top:871px;" width="14" height="9" viewBox="0 0 14 9"><path d="M2 7.500l5-5.500 5 5.500" fill="none" stroke="#222" stroke-width="1.500"/></svg>
<svg style="left:1305px;top:867px;" width="12" height="18" viewBox="0 0 12 18"><rect x="3.300" y="1" width="5.400" height="10" rx="2.700" fill="none" stroke="#1e63c8" stroke-width="1.400"/><path d="M1 9a5 5 0 0 0 10 0M6 14v3" fill="none" stroke="#1e63c8" stroke-width="1.400"/></svg>
<span class="t" style="left:1339.00px;top:872px;font:normal 11.5px 'Liberation Sans', sans-serif;line-height:1;color:#1f1f1f;letter-spacing:-0.344px;">УКР</span>
<svg style="left:1378px;top:868px;" width="17" height="14" viewBox="0 0 17 14"><g fill="none" stroke="#222" stroke-width="1.300"><path d="M1 5.500a10.500 10.500 0 0 1 15 0"/><path d="M3.500 8a7 7 0 0 1 10 0"/><path d="M6 10.500a3.500 3.500 0 0 1 5 0"/></g><circle cx="8.500" cy="12.500" r="1.200" fill="#222"/></svg>
<svg style="left:1402px;top:868px;" width="18" height="15" viewBox="0 0 18 15"><path d="M1 5.500h2.500l3.500-3.500v11l-3.500-3.500h-2.500z" fill="none" stroke="#222" stroke-width="1.200"/><g fill="none" stroke="#222" stroke-width="1.200"><path d="M9.500 5a3.500 3.500 0 0 1 0 5"/><path d="M11.800 3a6.500 6.500 0 0 1 0 9"/><path d="M14 1.200a9 9 0 0 1 0 12.600"/></g></svg>
<svg style="left:1425px;top:868px;" width="19" height="14" viewBox="0 0 19 14"><rect x="2.500" y="3.500" width="13" height="8" rx="1.500" fill="none" stroke="#222" stroke-width="1.300"/><rect x="4" y="5" width="10" height="5" fill="#222"/><rect x="16" y="6" width="1.800" height="3" fill="#222"/><path d="M1 1l4 3M3 0v3.500" stroke="#222" stroke-width="1.200"/></svg>
<span class="t" style="left:1488.50px;top:862px;font:normal 12px 'Liberation Sans', sans-serif;line-height:1;color:#1f1f1f;letter-spacing:-0.383px;">12:08</span>
<span class="t" style="left:1459.60px;top:878px;font:normal 12px 'Liberation Sans', sans-serif;line-height:1;color:#1f1f1f;letter-spacing:-0.296px;">26.04.2024</span>
<svg style="left:1524px;top:866px;" width="18" height="19" viewBox="0 0 18 19"><path d="M3 14.500v-1l1.500-2v-3.500a4.500 4.500 0 0 1 9 0v3.500l1.500 2v1z" fill="none" stroke="#222" stroke-width="1.200"/><path d="M7 16a2 2 0 0 0 4 0" fill="none" stroke="#222" stroke-width="1.200"/><path d="M6.500 6h2.500l-2.500 3h2.500M11 3h2l-2 2.300h2" fill="none" stroke="#222" stroke-width=".9"/></svg>
<svg style="left:1556px;top:864px;" width="26" height="26" viewBox="0 0 26 26"><defs><linearGradient id="cp" x1="0" y1="0" x2="1" y2="1"><stop offset="0" stop-color="#2fb7f5"/><stop offset=".35" stop-color="#3a6cf0"/><stop offset=".6" stop-color="#c44fd8"/><stop offset=".8" stop-color="#f0568a"/><stop offset="1" stop-color="#f7b23a"/></linearGradient></defs><path d="M9 1.500h7c2 0 3 1 3.500 2.500l1 3.500h1.500c2 0 3 1.500 2.500 3.500l-2.500 9c-.5 1.500-1.500 2.500-3.500 2.500h-9c-2 0-3-1-3.500-2.500l-1-3.500h-1.500c-2 0-3-1.500-2.500-3.500l2.500-9c.5-1.500 1.500-2.500 3.500-2.500z" fill="url(#cp)"/><path d="M10 7.500h5l2 9h-5z" fill="#f4e9df" opacity=".9"/></svg>
<div class="b" style="left:1565px;top:879.5px;width:17px;height:9.5px;background:#f5c518;border-radius:2px"></div>
<span class="t" style="left:1566.50px;top:881px;font:bold 7.5px 'Liberation Sans', sans-serif;line-height:1;color:#222;letter-spacing:-0.711px;">PRE</span>
</div></body></html>
